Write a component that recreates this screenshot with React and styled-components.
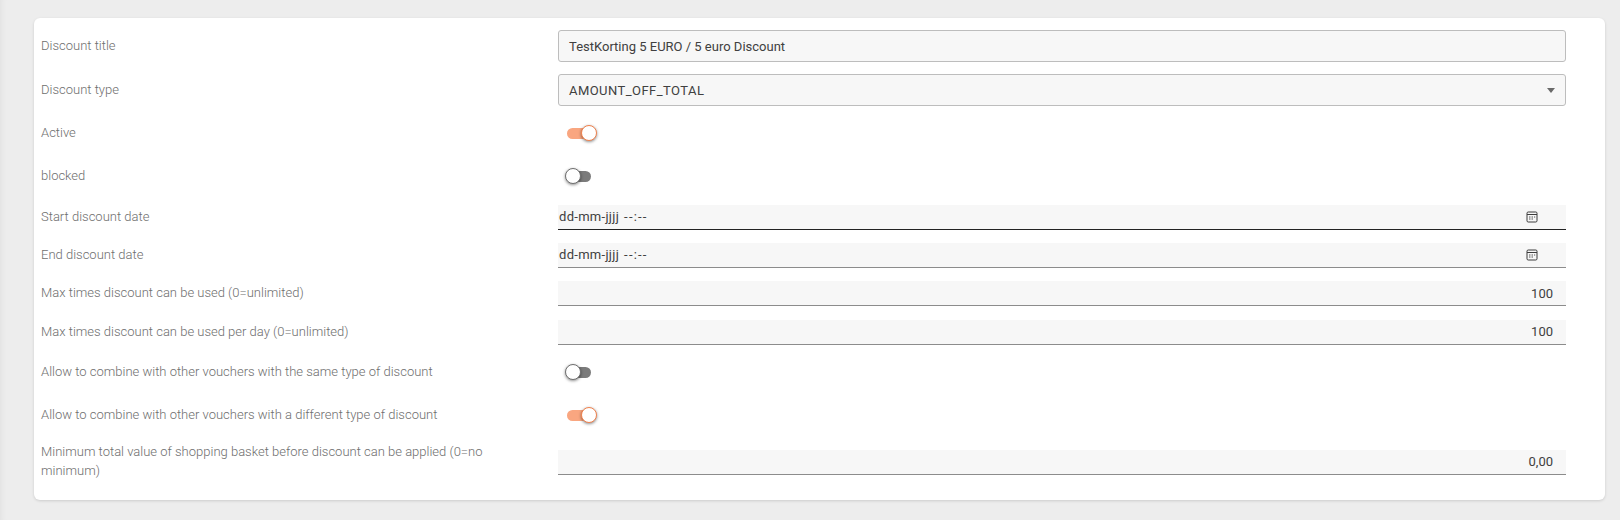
import React from 'react'
import styled, { createGlobalStyle } from 'styled-components'

const GlobalStyle = createGlobalStyle`
  html, body {
    margin: 0;
    padding: 0;
    background: #ededed;
  }
  body {
    font-family: Roboto, "Liberation Sans", sans-serif;
    font-size: 13px;
  }
`

const CalendarIcon = () => (
  <svg width='12' height='12' viewBox='0 0 12 12' fill='none'>
    <rect x='1' y='1' width='10' height='10' rx='1.2' stroke='#3d3d3d' strokeWidth='1' />
    <path d='M1 3.5h10' stroke='#3d3d3d' strokeWidth='1' />
    <path d='M3 6h1.5M5.5 6H7M8 6h1.2M3 8h1.5M5.5 8H7' stroke='#555' strokeWidth='1' />
  </svg>
)

function Field({ label, height, children }) {
  return (
    <Row height={height}>
      <Label>{label}</Label>
      <Control>{children}</Control>
    </Row>
  )
}

function DateField({ label, focused }) {
  return (
    <Field label={label} height={26.33}>
      <FlatBox focused={focused}>
        <span>
          <DatePart>dd-mm-jjjj</DatePart>
          <TimePart>--:--</TimePart>
        </span>
        <IconSlot>
          <CalendarIcon />
        </IconSlot>
      </FlatBox>
    </Field>
  )
}

function NumberField({ label, value, height = 26.33 }) {
  return (
    <Field label={label} height={height}>
      <FlatBox alignEnd>
        <span>{value}</span>
      </FlatBox>
    </Field>
  )
}

function ToggleField({ label, on }) {
  return (
    <Field label={label} height={31}>
      <Toggle on={on}>
        <Knob on={on} />
      </Toggle>
    </Field>
  )
}

export default function App() {
  return (
    <Page>
      <GlobalStyle />
      <Card>
        <Field label='Discount title' height={32}>
          <OutlinedBox>TestKorting 5 EURO / 5 euro Discount</OutlinedBox>
        </Field>
        <Field label='Discount type' height={32}>
          <OutlinedBox spaced>
            AMOUNT_OFF_TOTAL
            <Caret />
          </OutlinedBox>
        </Field>
        <ToggleField label='Active' on />
        <ToggleField label='blocked' />
        <DateField label='Start discount date' focused />
        <DateField label='End discount date' />
        <NumberField label='Max times discount can be used (0=unlimited)' value='100' />
        <NumberField label='Max times discount can be used per day (0=unlimited)' value='100' />
        <ToggleField label='Allow to combine with other vouchers with the same type of discount' />
        <ToggleField label='Allow to combine with other vouchers with a different type of discount' on />
        <NumberField
          label='Minimum total value of shopping basket before discount can be applied (0=no minimum)'
          value='0,00'
          height={38}
        />
      </Card>
    </Page>
  )
}

const Page = styled.div`
  width: 1620px;
  height: 520px;
  box-sizing: border-box;
  padding: 18px 15px 0 34px;
  overflow: hidden;
  box-shadow: inset 6px 0 6px -5px rgba(0, 0, 0, 0.06);
`

const Card = styled.div`
  display: flex;
  flex-direction: column;
  gap: 12px;
  height: 482px;
  box-sizing: border-box;
  padding: 12px 39px 0 7px;
  background: #fff;
  border-radius: 6px;
  box-shadow: 0 1px 3px rgba(0, 0, 0, 0.14);
`

const Row = styled.div`
  display: grid;
  grid-template-columns: 517px 1fr;
  grid-template-rows: minmax(0, 1fr);
  align-items: center;
  height: ${({ height }) => height}px;
`

const Label = styled.div`
  color: #6e6e6e;
  font-weight: 300;
  line-height: 19px;
  padding-right: 40px;
  margin-bottom: 2px;
`

const Control = styled.div`
  height: 100%;
  display: flex;
  align-items: center;
`

const OutlinedBox = styled.div`
  flex: 1;
  height: 100%;
  box-sizing: border-box;
  position: relative;
  display: flex;
  align-items: center;
  padding: 0 10px;
  color: #404040;
  letter-spacing: ${({ spaced }) => (spaced ? '0.45px' : '0')};
  background: #f7f7f7;
  border: 1px solid #bdbdbd;
  border-radius: 3px;
`

const Caret = styled.span`
  position: absolute;
  right: 10px;
  top: 13px;
  border-left: 4px solid transparent;
  border-right: 4px solid transparent;
  border-top: 5px solid #6a6a6a;
`

const FlatBox = styled.div`
  flex: 1;
  height: 25px;
  box-sizing: border-box;
  display: flex;
  align-items: center;
  justify-content: ${({ alignEnd }) => (alignEnd ? 'flex-end' : 'space-between')};
  padding: ${({ alignEnd }) => (alignEnd ? '0 13px 0 0' : '0 28px 0 1px')};
  color: #404040;
  background: #f7f7f7;
  border-bottom: 1px solid ${({ focused }) => (focused ? '#222' : '#8c8c8c')};
`

const DatePart = styled.span`
  letter-spacing: 0.3px;
`

const TimePart = styled.span`
  margin-left: 5px;
  letter-spacing: 1.2px;
`

const IconSlot = styled.span`
  display: flex;
`

const Toggle = styled.div`
  position: relative;
  width: 24px;
  height: 11px;
  margin-left: 9px;
  border-radius: 6px;
  background: ${({ on }) => (on ? '#f9a680' : '#7b7b7b')};
`

const Knob = styled.span`
  position: absolute;
  top: -3px;
  ${({ on }) => (on ? 'right: -6px;' : 'left: -2px;')}
  width: 16px;
  height: 16px;
  box-sizing: border-box;
  background: #fff;
  border-radius: 50%;
  border: 1px solid ${({ on }) => (on ? '#f2814c' : '#6f6f6f')};
  box-shadow: 0 1px 3px rgba(0, 0, 0, 0.45);
`
